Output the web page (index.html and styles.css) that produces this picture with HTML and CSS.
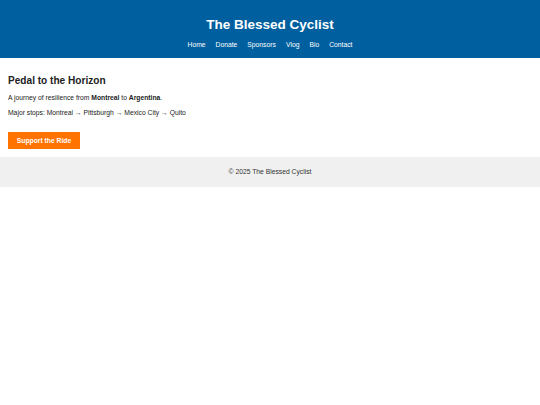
FILE: index.html
```html
<!DOCTYPE html>
<html lang="en">
<head>
<meta charset="utf-8">
<title>The Blessed Cyclist</title>
<link rel="stylesheet" href="styles.css">
</head>
<body>
<header class="site-header">
  <h1 class="site-title">The Blessed Cyclist</h1>
  <nav class="site-nav">
    <a href="#">Home</a>
    <a href="#">Donate</a>
    <a href="#">Sponsors</a>
    <a href="#">Vlog</a>
    <a href="#">Bio</a>
    <a href="#">Contact</a>
  </nav>
</header>
<main class="content">
  <h2 class="headline">Pedal to the Horizon</h2>
  <p class="text">A journey of resilience from <strong>Montreal</strong> to <strong>Argentina</strong>.</p>
  <p class="text">Major stops: Montreal → Pittsburgh → Mexico City → Quito</p>
  <a class="btn" href="#">Support the Ride</a>
</main>
<footer class="site-footer">© 2025 The Blessed Cyclist</footer>
</body>
</html>
```
FILE: styles.css
```css
html, body {
  margin: 0;
  padding: 0;
  background: #fff;
}
body {
  font-family: "Liberation Sans", Arial, sans-serif;
  font-size: 6.75px;
  line-height: 1.15;
  color: #222;
}
.site-header {
  background: #00609f;
  color: #fff;
  text-align: center;
  padding: 16.5px 0 9px;
}
.site-title {
  margin: 0 0 9px;
  font-size: 13.5px;
  font-weight: bold;
  line-height: 1.15;
}
.site-nav {
  display: flex;
  justify-content: center;
  gap: 10px;
}
.site-nav a {
  color: #fff;
  text-decoration: none;
}
.content {
  padding: 8px;
}
.headline {
  margin: 9px 0 8px;
  font-size: 10.1px;
  line-height: 1.15;
}
.text {
  margin: 0 0 7.2px;
}
.text + .btn {
  margin-top: 8px;
}
.btn {
  display: inline-block;
  background: #ff7300;
  color: #fff;
  font-weight: bold;
  text-decoration: none;
  padding: 4.6px 8.8px;
}
.site-footer {
  background: #f0f0f0;
  color: #333;
  text-align: center;
  padding: 11px 0;
}
```
